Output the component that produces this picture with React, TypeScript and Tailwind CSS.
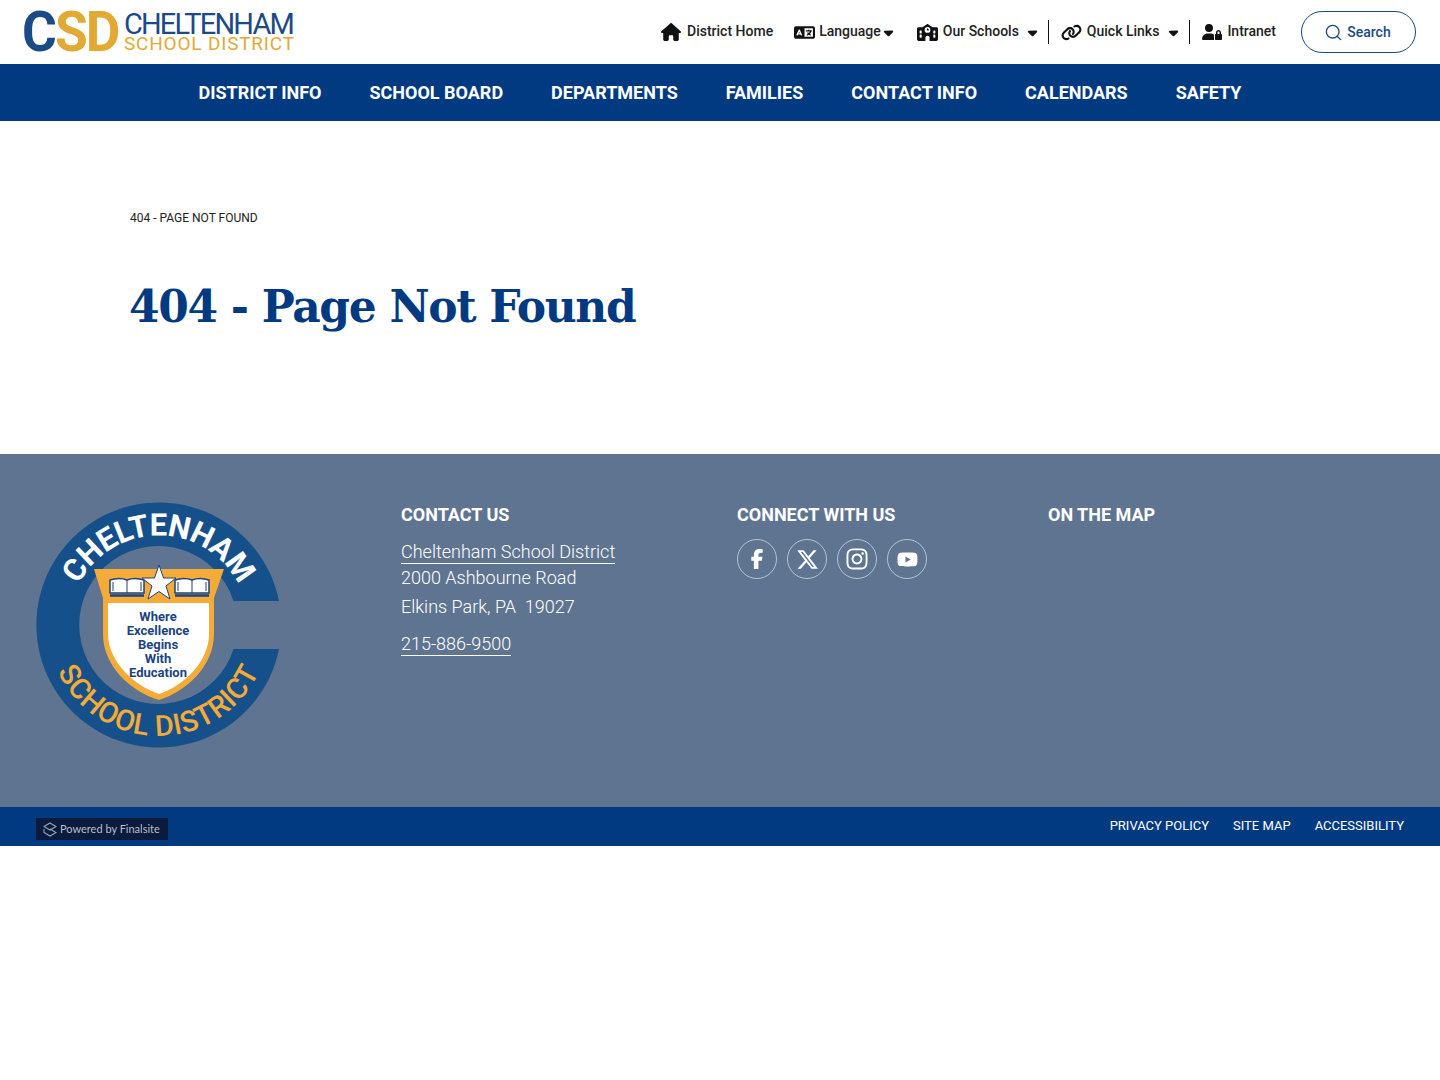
import React from 'react';
import { Search } from 'lucide-react';
import { FaCaretDown, FaFacebookF, FaHouse, FaInstagram, FaLanguage, FaLink, FaSchool, FaUserLock, FaXTwitter, FaYoutube } from 'react-icons/fa6';

const roboto = 'font-["Roboto",sans-serif]';

const navItems = ['District Info', 'School Board', 'Departments', 'Families', 'Contact Info', 'Calendars', 'Safety'];

const Logo: React.FC = () => (
  <div className="flex items-center">
    <div className="w-[102px] shrink-0 -ml-[2px]">
      <div className={`${roboto} text-[56px] leading-[40px] font-bold tracking-[-2px] flex origin-left scale-x-[0.95] w-fit`}>
        <span className="text-[#1c4a87]">C</span>
        <span className="text-[#e3a935]">SD</span>
      </div>
    </div>
    <div className="flex flex-col w-[170px]">
      <span className={`${roboto} text-[29px] leading-[24px] tracking-[-1.85px] text-[#1c4a87] whitespace-nowrap`}>CHELTENHAM</span>
      <span className={`${roboto} text-[19px] leading-[16px] tracking-[0.8px] text-[#e3a935] whitespace-nowrap`}>SCHOOL DISTRICT</span>
    </div>
  </div>
);

const UtilityLink: React.FC<{ icon: React.ReactNode; label: string; caret?: boolean; caretGap?: string; className?: string }> = ({ icon, label, caret, caretGap, className }) => (
  <a className={`flex items-center text-[14px] font-medium text-[#222] ${className ?? ''}`}>
    {icon}
    <span className="-mt-0.5">{label}</span>
    {caret && <FaCaretDown className={`text-[#111] text-[15px] ${caretGap ?? 'ml-1.5'}`} />}
  </a>
);

const Header: React.FC = () => (
  <header className="h-16 bg-white flex items-center justify-between pl-6 pr-6">
    <Logo />
    <div className={`flex items-center ${roboto}`}>
      <UtilityLink icon={<FaHouse className="text-[20px] text-[#111] mr-1.5" />} label="District Home" />
      <UtilityLink className="ml-[21px]" icon={<FaLanguage className="text-[21px] text-[#111] mr-1" />} label="Language" caret caretGap="ml-0" />
      <UtilityLink className="ml-[21px]" icon={<FaSchool className="text-[21px] text-[#111] mr-[5px]" />} label="Our Schools" caret />
      <div className="w-px h-6 bg-[#111] ml-2 mr-3" />
      <UtilityLink icon={<FaLink className="text-[21px] text-[#111] mr-[5px]" />} label="Quick Links" caret caretGap="ml-[7px]" />
      <div className="w-px h-6 bg-[#111] ml-2 mr-3" />
      <UtilityLink icon={<FaUserLock className="text-[20px] text-[#111] mr-[5px]" />} label="Intranet" />
      <button className="ml-[25px] w-[115px] h-[42px] rounded-full border border-[#1c4a80] flex items-center justify-center gap-1 pr-[2px] text-[14px] font-medium text-[#1c4a80]">
        <Search size={19} strokeWidth={1.7} />
        Search
      </button>
    </div>
  </header>
);

const MainNav: React.FC = () => (
  <nav className={`h-[57px] bg-[#023a82] flex items-center justify-center gap-12 ${roboto}`}>
    {navItems.map((item) => (
      <a key={item} className="text-white text-[18px] font-bold uppercase">{item}</a>
    ))}
  </nav>
);

const Book: React.FC<{ x: number }> = ({ x }) => (
  <g transform={`translate(${x} 76)`} fill="#fff" stroke="#1c4382">
    <path d="M 0 2 C 6 0 12 0 17 2 C 22 0 28 0 34 2 L 34 15 L 0 15 Z" strokeWidth="1.5" />
    <path d="M 17 2 L 17 15 M 3 4 L 3 13 M 31 4 L 31 13" strokeWidth="1" />
    <path d="M 0 17.5 L 34 17.5" strokeWidth="2.5" />
  </g>
);

const Seal: React.FC = () => (
  <svg width="246" height="246" viewBox="0 0 246 246" className="block" style={{ fontFamily: 'Roboto, sans-serif' }}>
    <defs>
      <path id="seal-top" d="M 33.5 123 A 89.5 89.5 0 0 1 212.5 123" />
      <path id="seal-bottom" d="M 12 123 A 111 111 0 0 0 234 123" />
    </defs>
    <g transform="translate(-0.5 0)">
      <path d="M 243.5 99 A 122.5 122.5 0 1 0 243.5 147 L 198 147 A 79 79 0 1 1 198 99 Z" fill="#16508a" />
      <text fontSize="31" fontWeight="700" fill="#fff" textAnchor="middle" letterSpacing="-0.5">
        <textPath href="#seal-top" startOffset="50%">CHELTENHAM</textPath>
      </text>
      <text fontSize="29" fontWeight="500" fill="#f2ab38" textAnchor="middle" letterSpacing="0.5">
        <textPath href="#seal-bottom" startOffset="50%">SCHOOL DISTRICT</textPath>
      </text>
    </g>
    <g transform="translate(-1 0)">
      <path d="M 59 67 L 189 67 L 179 96 L 179 132 C 179 165 150 190 124 198 C 97 190 68 165 68 132 L 68 96 Z" fill="#f4ab38" />
      <path d="M 73 101 L 174 101 L 174 132 C 174 160 148 184 124 192 C 100 184 73 160 73 132 Z" fill="#fff" />
      <Book x={75} />
      <Book x={140} />
      <path d="M 124 63 L 128.5 76 L 141 76 L 131 84 L 135 97 L 124 89.5 L 113 97 L 117 84 L 107 76 L 119.5 76 Z" fill="#fff" stroke="#1c4382" strokeWidth="1" />
    </g>
    <g fontSize="13" fontWeight="700" fill="#1c4382" textAnchor="middle">
      <text x="122" y="119">Where</text>
      <text x="122" y="133">Excellence</text>
      <text x="122" y="147">Begins</text>
      <text x="122" y="161">With</text>
      <text x="122" y="175">Education</text>
    </g>
  </svg>
);

const socials = [
  { name: 'Facebook', icon: <FaFacebookF className="text-[20px]" /> },
  { name: 'X', icon: <FaXTwitter className="text-[23px]" /> },
  { name: 'Instagram', icon: <FaInstagram className="text-[24px]" /> },
  { name: 'YouTube', icon: <FaYoutube className="text-[21px]" /> },
];

const Footer: React.FC = () => (
  <footer className={roboto}>
    <div className="h-[353px] bg-[#5f7491] text-white flex pl-9 pt-12">
      <div className="w-[365px]">
        <Seal />
      </div>
      <div className="w-[336px] pt-px">
        <h2 className="text-[18px] leading-6 font-bold uppercase">Contact Us</h2>
        <div className="mt-[13px] text-[18px] font-light leading-[29px]">
          <a className="block w-fit border-b border-white leading-[23px]">Cheltenham School District</a>
          <p className="-mt-px">2000 Ashbourne Road</p>
          <p className="whitespace-pre">Elkins Park, PA  19027</p>
          <a className="block w-fit mt-[11px] border-b border-white leading-[23px]">215-886-9500</a>
        </div>
      </div>
      <div className="w-[311px] pt-px">
        <h2 className="text-[18px] leading-6 font-bold uppercase">Connect With Us</h2>
        <div className="mt-3 flex gap-2.5">
          {socials.map((s) => (
            <a key={s.name} aria-label={s.name} className="w-10 h-10 rounded-full border border-[#b9c4d4] flex items-center justify-center">
              {s.icon}
            </a>
          ))}
        </div>
      </div>
      <div className="pt-px">
        <h2 className="text-[18px] leading-6 font-bold uppercase">On The Map</h2>
      </div>
    </div>
    <div className="h-[39px] bg-[#023a82] flex items-start justify-between pl-9 pr-9">
      <div className="mt-[11px] w-[132px] h-[22px] bg-[#0a1b3d] flex items-center pl-[7px] gap-[3px]">
        <svg width="14" height="15" viewBox="0 0 14 15" fill="none" stroke="#9aa6b8" strokeWidth="1.1" className="shrink-0">
          <path d="M 7 1 L 13 4.5 L 7 8 L 1 4.5 Z" />
          <path d="M 1 7 L 1 10.5 L 7 14 L 13 10.5 L 7 7" />
        </svg>
        <span className="text-[11px] text-[#b6bfcc] font-['Lato',sans-serif] whitespace-nowrap">Powered by Finalsite</span>
      </div>
      <div className="flex gap-6 mt-[10px] text-[13px] leading-[17px] text-white uppercase">
        <a>Privacy Policy</a>
        <a>Site Map</a>
        <a>Accessibility</a>
      </div>
    </div>
  </footer>
);

const App: React.FC = () => (
  <div className="min-h-screen bg-white">
    <Header />
    <MainNav />
    <main className="h-[333px] pl-[130px] pt-[89px]">
      <p className={`${roboto} text-[12px] leading-[16px] text-[#222] uppercase`}>404 - Page Not Found</p>
      <h1 className="mt-[51px] -ml-px text-[44px] leading-[60px] tracking-[-1.35px] font-bold text-[#023a82] font-['DejaVu_Serif',serif]">404 - Page Not Found</h1>
    </main>
    <Footer />
  </div>
);

export default App;
